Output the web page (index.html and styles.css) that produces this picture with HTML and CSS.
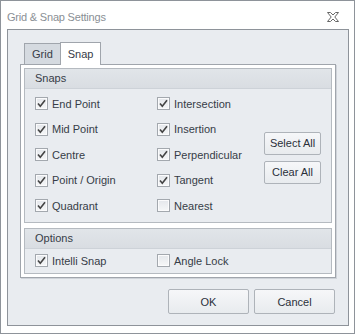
FILE: index.html
```html
<!DOCTYPE html>
<html lang="en">
<head>
  <meta charset="UTF-8">
  <title>Grid &amp; Snap Settings</title>
  <link rel="stylesheet" href="styles.css">
</head>
<body>
  <div class="window">
    <div class="titlebar">
      <span class="title">Grid &amp; Snap Settings</span>
      <svg class="close" width="12" height="10" viewBox="0 0 12 10">
        <polygon points="0.5,0.5 3.5,0.5 6,3 8.5,0.5 11.5,0.5 7.8,5 11.5,9.5 8.5,9.5 6,7 3.5,9.5 0.5,9.5 4.2,5" fill="#fff" stroke="#666" stroke-width="1"/>
      </svg>
    </div>

    <div class="panel">
      <div class="tabs">
        <div class="tab">Grid</div>
        <div class="tab active">Snap</div>
      </div>

      <div class="tabpage">
        <div class="group snaps">
          <div class="group-head">Snaps</div>
          <div class="group-body">
            <div class="checks">
              <label class="check"><span class="cb on"></span>End Point</label>
              <label class="check"><span class="cb on"></span>Intersection</label>
              <label class="check"><span class="cb on"></span>Mid Point</label>
              <label class="check"><span class="cb on"></span>Insertion</label>
              <label class="check"><span class="cb on"></span>Centre</label>
              <label class="check"><span class="cb on"></span>Perpendicular</label>
              <label class="check"><span class="cb on"></span>Point / Origin</label>
              <label class="check"><span class="cb on"></span>Tangent</label>
              <label class="check"><span class="cb on"></span>Quadrant</label>
              <label class="check"><span class="cb"></span>Nearest</label>
            </div>
            <div class="side-buttons">
              <button class="btn small">Select All</button>
              <button class="btn small">Clear All</button>
            </div>
          </div>
        </div>

        <div class="group options">
          <div class="group-head">Options</div>
          <div class="group-body">
            <div class="checks one-row">
              <label class="check"><span class="cb on"></span>Intelli Snap</label>
              <label class="check"><span class="cb"></span>Angle Lock</label>
            </div>
          </div>
        </div>
      </div>

      <div class="footer">
        <button class="btn big">OK</button>
        <button class="btn big">Cancel</button>
      </div>
    </div>
  </div>
</body>
</html>
```

FILE: styles.css
```css
body {
  margin: 0;
  background: #fff;
  font-family: "Liberation Sans", Arial, sans-serif;
  font-size: 11px;
  color: #363c47;
}
.window {
  width: 355px;
  height: 334px;
  box-sizing: border-box;
  border: 1px solid #8e939a;
  padding: 0 5px 7px 6px;
  display: flex;
  flex-direction: column;
  background: #fff;
}
.titlebar {
  height: 28px;
  flex: none;
  display: flex;
  align-items: center;
  justify-content: space-between;
  padding: 3px 10px 0 0;
  box-sizing: border-box;
}
.title {
  color: #8a8f95;
  font-size: 11px;
  letter-spacing: -0.2px;
}
.close {
  display: block;
}
.panel {
  flex: 1;
  border: 1px solid #8e939a;
  background: #e9ecf0;
  padding: 12px 12px 0 12px;
  display: flex;
  flex-direction: column;
}
.tabs {
  height: 22px;
  display: flex;
  align-items: flex-end;
  padding-left: 4px;
}
.tab {
  height: 21px;
  box-sizing: border-box;
  border: 1px solid #a0a5ac;
  border-bottom: none;
  background: #d5dae0;
  padding: 0 7px;
  line-height: 20px;
}
.tab.active {
  height: 23px;
  margin-left: -1px;
  margin-bottom: -1px;
  background: #fff;
  line-height: 22px;
  position: relative;
  z-index: 1;
}
.tabpage {
  height: 214px;
  box-sizing: border-box;
  border: 1px solid #a0a5ac;
  background: #fff;
  padding: 3px;
  box-shadow: 1px 1px 0 #cfd3d9;
}
.group {
  border: 1px solid #b5bac0;
  background: #e9ecf0;
  box-sizing: border-box;
  display: flex;
  flex-direction: column;
}
.group.snaps {
  height: 155px;
}
.group.options {
  height: 46px;
  margin-top: 5px;
}
.group-head {
  height: 19px;
  flex: none;
  background: linear-gradient(#e1e5e9, #d9dde2);
  border-bottom: 1px solid #cdd2d8;
  padding-left: 10px;
  line-height: 19px;
}
.group-body {
  flex: 1;
  display: flex;
  align-items: center;
  padding: 0 10px;
}
.checks {
  flex: 1;
  display: grid;
  grid-template-columns: 122px 1fr;
  grid-auto-rows: 25.5px;
  align-items: center;
  margin-top: -2px;
}
.checks.one-row {
  margin-top: -1px;
}
.check {
  display: flex;
  align-items: center;
  gap: 4px;
}
.cb {
  width: 13px;
  height: 13px;
  box-sizing: border-box;
  border: 1px solid #a3a8ae;
  background: linear-gradient(#e4e7eb, #f6f7f8);
  box-shadow: inset 0 0 0 1px #fbfbfc;
  flex: none;
}
.cb.on {
  background-image: url("data:image/svg+xml,%3Csvg xmlns='http://www.w3.org/2000/svg' width='11' height='11'%3E%3Cpath d='M2 5.5 L4.3 8.3 L9 2.2' fill='none' stroke='%23444' stroke-width='1.6'/%3E%3C/svg%3E"), linear-gradient(#e4e7eb, #f6f7f8);
  background-repeat: no-repeat;
}
.side-buttons {
  display: flex;
  flex-direction: column;
  gap: 6px;
  padding-top: 4px;
}
.btn {
  font-family: "Liberation Sans", Arial, sans-serif;
  font-size: 11px;
  color: #2a303a;
  border: 1px solid #aeb3b9;
  border-radius: 2px;
  background: linear-gradient(#f6f7f9, #e8ebee);
  padding: 0;
}
.btn.small {
  width: 57px;
  height: 23px;
}
.footer {
  display: flex;
  justify-content: flex-end;
  gap: 5px;
  margin-top: 11px;
  padding-right: 1px;
}
.btn.big {
  width: 81px;
  height: 25px;
}
```
